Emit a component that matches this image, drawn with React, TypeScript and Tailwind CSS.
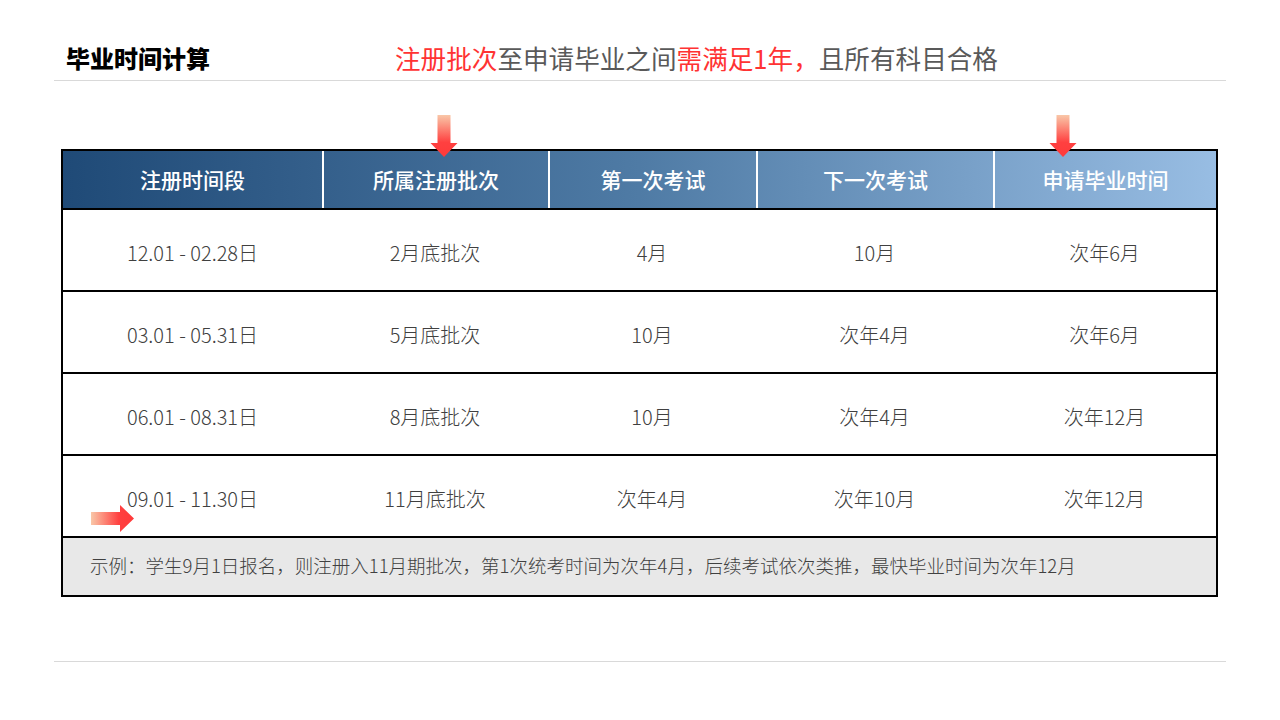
import React from "react";

const font = { fontFamily: '"Noto Sans CJK SC", "Noto Sans", sans-serif' };

const rows = [
  ["12.01 - 02.28日", "2月底批次", "4月", "10月", "次年6月"],
  ["03.01 - 05.31日", "5月底批次", "10月", "次年4月", "次年6月"],
  ["06.01 - 08.31日", "8月底批次", "10月", "次年4月", "次年12月"],
  ["09.01 - 11.30日", "11月底批次", "次年4月", "次年10月", "次年12月"],
];

const heads = ["注册时间段", "所属注册批次", "第一次考试", "下一次考试", "申请毕业时间"];

const cols = "grid grid-cols-[259px_226px_208px_237px_1fr]";

function DownArrow({ id }: { id: string }) {
  return (
    <svg width="28" height="42" viewBox="0 0 28 42">
      <defs>
        <linearGradient id={id} x1="0" y1="0" x2="0" y2="1">
          <stop offset="0" stopColor="#f9c7a8" />
          <stop offset="0.65" stopColor="#ff4040" />
          <stop offset="1" stopColor="#ff3a3a" />
        </linearGradient>
      </defs>
      <path d="M7.5 0 H20.5 V28 H27.5 L14 42 L0.5 28 H7.5 Z" fill={`url(#${id})`} />
    </svg>
  );
}

function RightArrow() {
  return (
    <svg width="43" height="27" viewBox="0 0 43 27">
      <defs>
        <linearGradient id="ra" x1="0" y1="0" x2="1" y2="0">
          <stop offset="0" stopColor="#f9c7a8" />
          <stop offset="0.65" stopColor="#ff4040" />
          <stop offset="1" stopColor="#ff3a3a" />
        </linearGradient>
      </defs>
      <path d="M0 7 H29 V0 L43 13.5 L29 27 V20 H0 Z" fill="url(#ra)" />
    </svg>
  );
}

export default function App() {
  return (
    <div className="relative w-[1280px] h-[720px] bg-white overflow-hidden" style={font}>
      <div className="mx-[54px] flex h-[81px] items-end border-b border-[#d9d9d9] pb-[4px]">
        <div className="w-[341px] pl-[12px] text-[24px] font-black leading-[36px] text-black">毕业时间计算</div>
        <div className="text-[25.6px] leading-[36px] text-[#595959]">
          <span className="text-[#ff3333]">注册批次</span>至申请毕业之间<span className="text-[#ff3333]">需满足1年，</span>且所有科目合格
        </div>
      </div>

      <div className="ml-[61px] mt-[68px] w-[1157px] border-2 border-black">
        <div className={`${cols} h-[59px] border-b-2 border-black bg-gradient-to-r from-[#1f4a77] via-[#4f7ba5] to-[#98bde3] text-[21px] font-medium text-white`}>
          {heads.map((h, i) => (
            <div key={h} className={`flex items-center justify-center ${i > 0 ? "border-l-2 border-white" : ""}`}>
              {h}
            </div>
          ))}
        </div>
        {rows.map((r, ri) => (
          <div key={ri} className={`${cols} h-[82px] border-b-2 border-black text-[20px] font-light text-[#404040]`}>
            {r.map((c, ci) => (
              <div key={ci} className="flex items-center justify-center pt-[6px]">
                {c}
              </div>
            ))}
          </div>
        ))}
        <div className="flex h-[57px] items-center bg-[#e8e8e8] pb-[2px] pl-[27px] text-[18.5px] font-light text-[#404040]">
          示例：学生9月1日报名，则注册入11月期批次，第1次统考时间为次年4月，后续考试依次类推，最快毕业时间为次年12月
        </div>
      </div>

      <div className="mx-[54px] mt-[64px] border-b border-[#d9d9d9]" />

      <div className="absolute left-[430px] top-[115px]">
        <DownArrow id="da1" />
      </div>
      <div className="absolute left-[1049px] top-[115px]">
        <DownArrow id="da2" />
      </div>
      <div className="absolute left-[91px] top-[505px]">
        <RightArrow />
      </div>
    </div>
  );
}
